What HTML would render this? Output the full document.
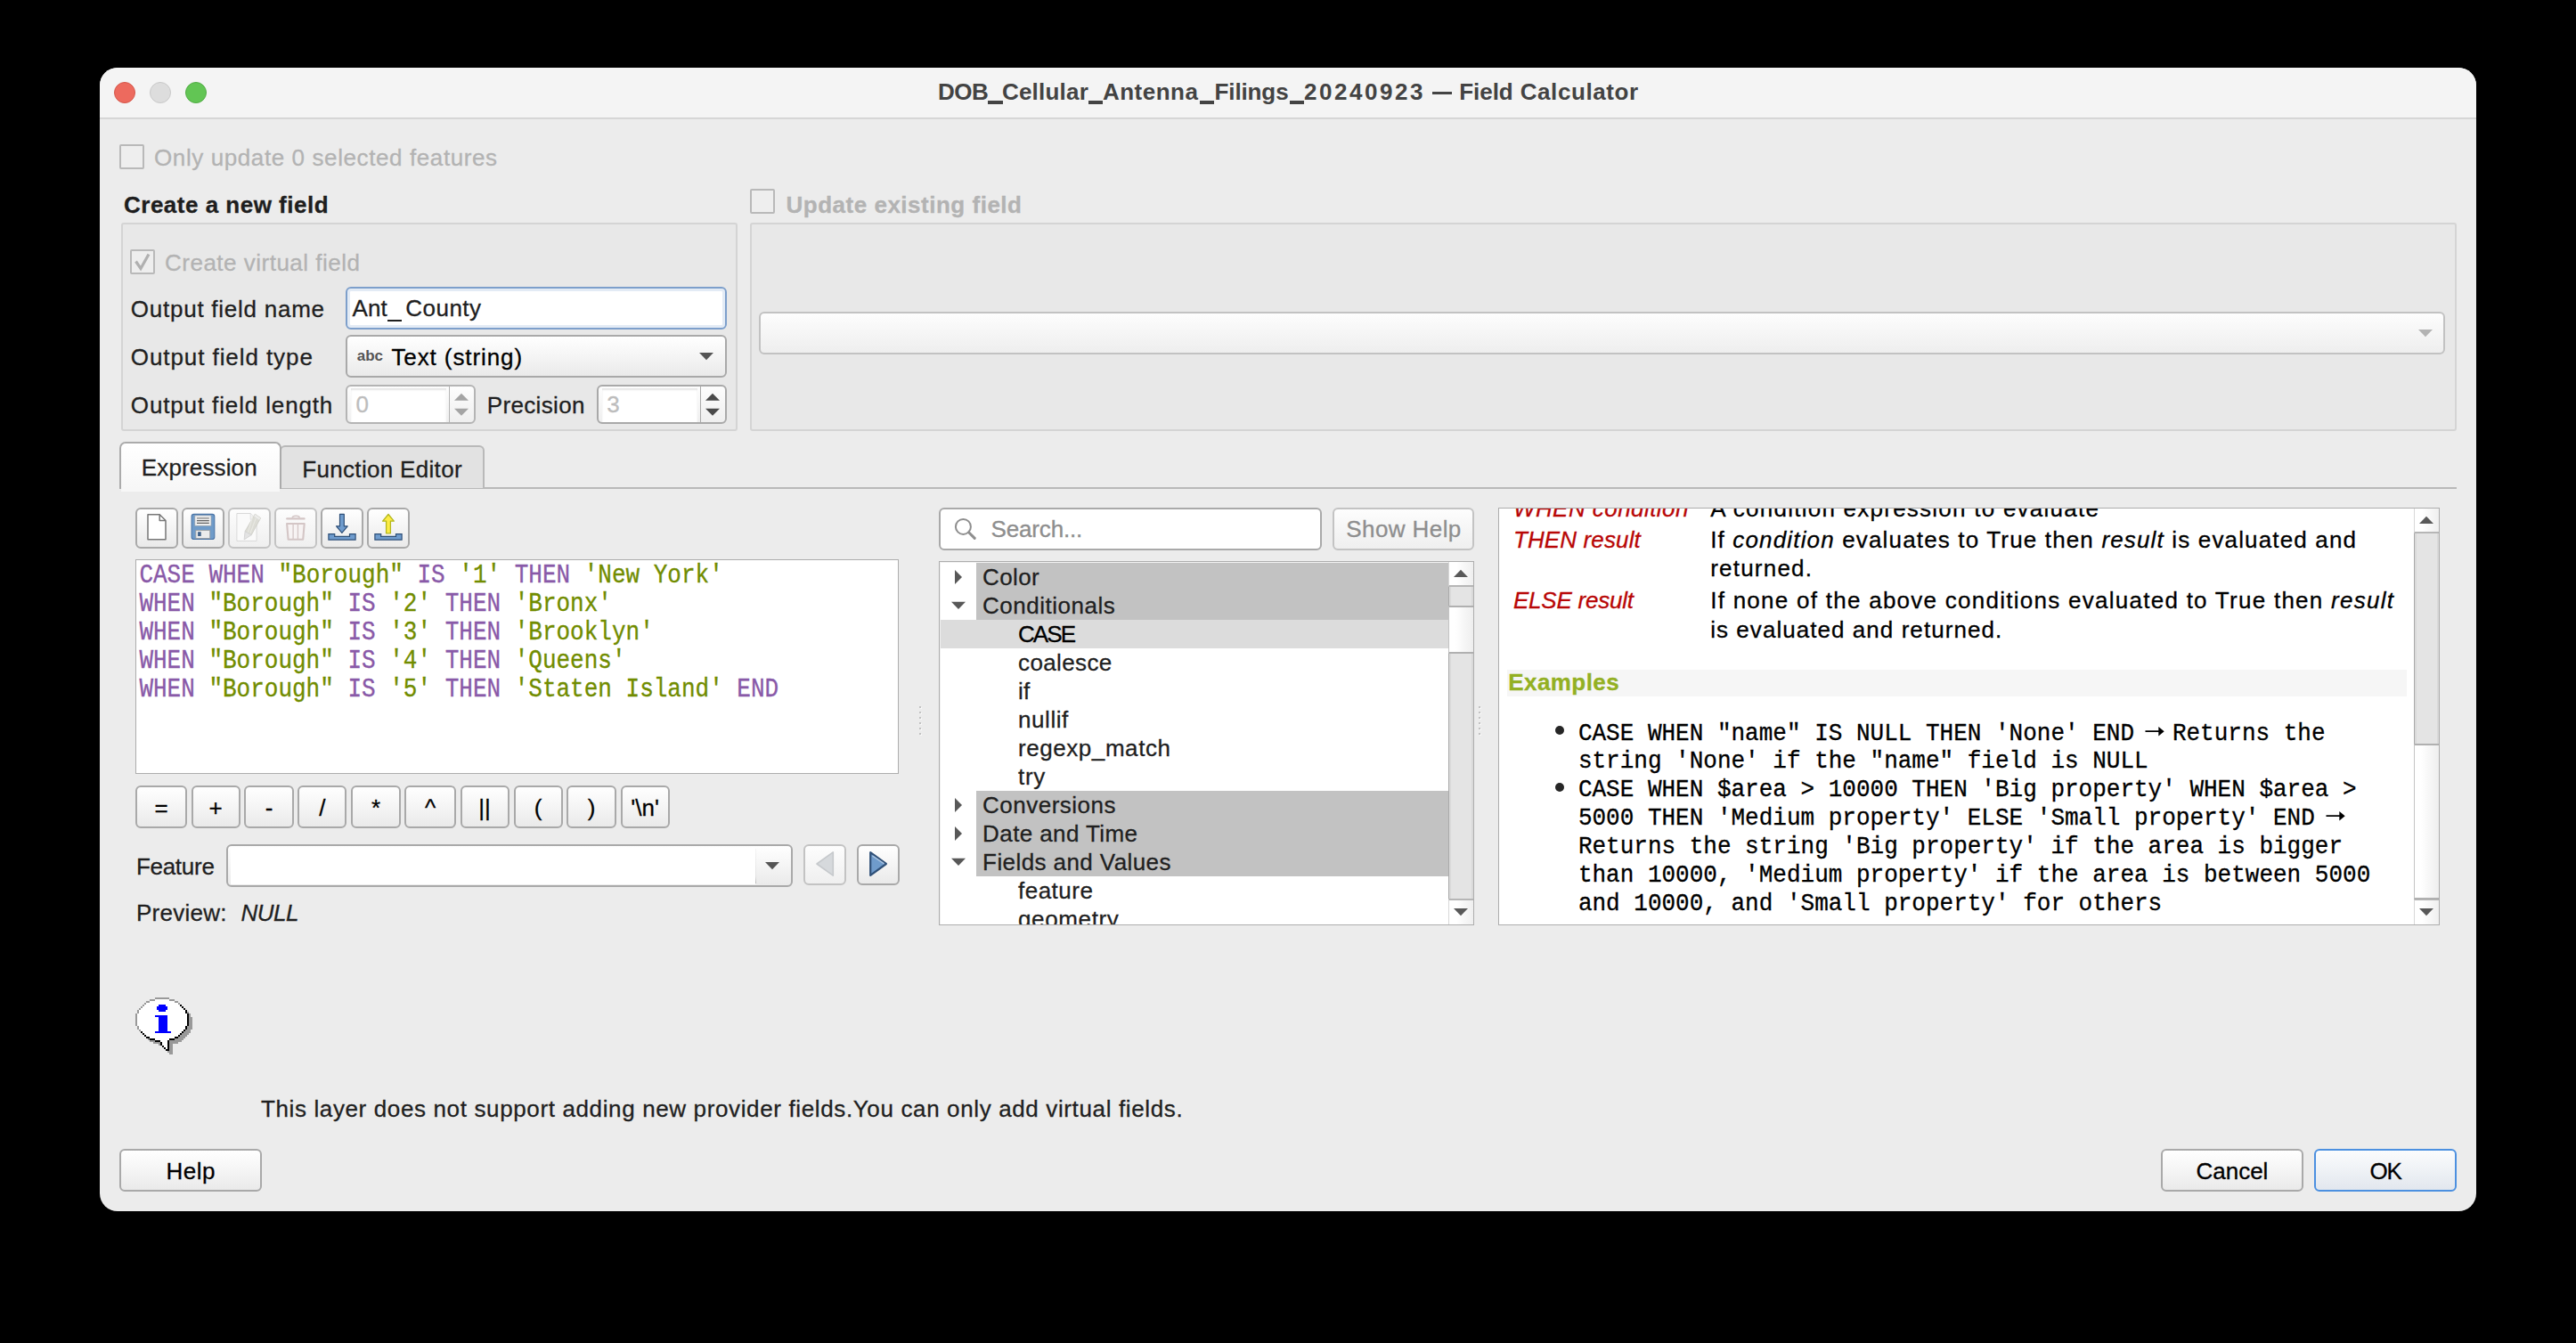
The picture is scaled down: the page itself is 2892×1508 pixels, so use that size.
<!DOCTYPE html>
<html><head><meta charset="utf-8"><title>Field Calculator</title>
<style>
html,body{margin:0;padding:0;background:#000;}
body{width:2892px;height:1508px;position:relative;overflow:hidden;font-family:"Liberation Sans",sans-serif;color:#1f1f1f;}
div,span.t,svg{position:absolute;box-sizing:border-box;}
span.t{white-space:pre;-webkit-text-stroke:0.3px;}
.win{left:112px;top:76px;width:2668px;height:1284px;border-radius:20px;background:#ececec;overflow:hidden;}
.tb{left:0;top:0;width:100%;height:58px;background:#f4f4f4;border-bottom:1px solid #dcdcdc;box-shadow:inset 0 -1px 0 #cecece;}
.tl{width:24px;height:24px;border-radius:50%;top:92px;}
.btn{border:2px solid #a9a9a9;border-radius:6px;background:linear-gradient(#ffffff,#eaeaea);}
.btnd{border:2px solid #c3c3c3;border-radius:6px;background:linear-gradient(#fdfdfd,#efefef);}
.inp{border:2px solid #a9a9a9;border-radius:6px;background:#fff;}
.gb{border:2px solid #d4d4d4;background:#e8e8e8;border-radius:3px;}
.cb{border:2px solid #b9b9b9;background:#eeeeee;border-radius:2px;}
.pane{background:#fff;border:1px solid #adadad;}
.ar{display:inline-block;width:42.9px;height:10px;position:relative;}
</style></head><body>

<div class="win"><div class="tb"></div></div>
<div class="tl" style="left:128px;background:#ed6a5e;border:1px solid #d5584c"></div>
<div class="tl" style="left:168px;background:#dddddd;border:1px solid #c9c9c9"></div>
<div class="tl" style="left:208px;background:#62c554;border:1px solid #52ad46"></div>
<span class="t" style="left:1052.9px;top:90.0px;font-size:26px;line-height:26px;font-weight:700;color:#434343;letter-spacing:-0.394px;-webkit-text-stroke:0;">DOB</span>
<span class="t" style="left:1124.9px;top:90.0px;font-size:26px;line-height:26px;font-weight:700;color:#434343;letter-spacing:0.228px;-webkit-text-stroke:0;">Cellular</span>
<span class="t" style="left:1237.9px;top:90.0px;font-size:26px;line-height:26px;font-weight:700;color:#434343;letter-spacing:0.500px;-webkit-text-stroke:0;">Antenna</span>
<span class="t" style="left:1363.5px;top:90.0px;font-size:26px;line-height:26px;font-weight:700;color:#434343;letter-spacing:-0.112px;-webkit-text-stroke:0;">Filings</span>
<span class="t" style="left:1464.1px;top:90.0px;font-size:26px;line-height:26px;font-weight:700;color:#434343;letter-spacing:2.539px;-webkit-text-stroke:0;">20240923</span>
<span class="t" style="left:1638.2px;top:90.0px;font-size:26px;line-height:26px;font-weight:700;color:#434343;letter-spacing:-0.034px;-webkit-text-stroke:0;">Field</span>
<span class="t" style="left:1706.7px;top:90.0px;font-size:26px;line-height:26px;font-weight:700;color:#434343;letter-spacing:0.594px;-webkit-text-stroke:0;">Calculator</span>
<div class="" style="left:1109.3px;top:113.4px;width:16.3px;height:3.3px;background:#434343;"></div>
<div class="" style="left:1221.8px;top:113.4px;width:16.3px;height:3.3px;background:#434343;"></div>
<div class="" style="left:1346.5px;top:113.4px;width:16.3px;height:3.3px;background:#434343;"></div>
<div class="" style="left:1447.6px;top:113.4px;width:16.3px;height:3.3px;background:#434343;"></div>
<div class="" style="left:1608.0px;top:102.5px;width:22.2px;height:3.3px;background:#434343;"></div>
<div class="cb" style="left:134.0px;top:162.0px;width:28.0px;height:28.0px;"></div>
<span class="t" style="left:173.0px;top:164.0px;font-size:26px;line-height:26px;color:#b3b3b3;letter-spacing:0.599px;">Only update 0 selected features</span>
<span class="t" style="left:139.0px;top:217.2px;font-size:26px;line-height:26px;font-weight:700;color:#1e1e1e;letter-spacing:0.496px;">Create a new field</span>
<div class="gb" style="left:136.0px;top:250.0px;width:691.5px;height:233.5px;"></div>
<div class="cb" style="left:146.0px;top:280.0px;width:28.0px;height:28.0px;"><svg width="24" height="24" viewBox="0 0 24 24" style="left:0;top:0"><path d="M4.5 11.5 L10 19.5 L19 3.5" fill="none" stroke="#b0b0b0" stroke-width="3.2"/></svg></div>
<span class="t" style="left:185.0px;top:281.9px;font-size:26px;line-height:26px;color:#b3b3b3;letter-spacing:0.498px;">Create virtual field</span>
<span class="t" style="left:146.8px;top:333.9px;font-size:26px;line-height:26px;letter-spacing:0.751px;">Output field name</span>
<span class="t" style="left:146.8px;top:387.8px;font-size:26px;line-height:26px;letter-spacing:0.921px;">Output field type</span>
<span class="t" style="left:146.8px;top:441.6px;font-size:26px;line-height:26px;letter-spacing:0.861px;">Output field length</span>
<div class="" style="left:388.0px;top:322.0px;width:428.0px;height:48.0px;border:2px solid #7d9fcb;border-radius:6px;background:#fff;box-shadow:inset 0 0 0 3px #e3ebf5;"></div>
<span class="t" style="left:395.4px;top:333.3px;font-size:26px;line-height:26px;letter-spacing:0.190px;">Ant</span>
<div class="" style="left:435.0px;top:359.2px;width:15.7px;height:2.0px;background:#1f1f1f;"></div>
<span class="t" style="left:455.3px;top:333.3px;font-size:26px;line-height:26px;letter-spacing:0.468px;">County</span>
<div class="btn" style="left:388.0px;top:376.0px;width:428.0px;height:48.0px;"></div>
<span class="t" style="left:400.8px;top:390.8px;font-size:17px;line-height:17px;font-weight:700;color:#555555;letter-spacing:-0.032px;-webkit-text-stroke:0;">abc</span>
<span class="t" style="left:439.4px;top:388.3px;font-size:26px;line-height:26px;color:#000;letter-spacing:0.907px;">Text (string)</span>
<svg style="left:784px;top:395px" width="18" height="10" viewBox="0 0 18 10"><path d="M1 1 L17 1 L9 9.3 Z" fill="#555"/></svg>
<div class="" style="left:388.0px;top:432.0px;width:146.0px;height:44.0px;border:2px solid #b4b4b4;border-radius:6px;background:linear-gradient(#fdfdfd,#efefef);"></div><div class="" style="left:393.5px;top:436.0px;width:107.5px;height:37.5px;background:#fff;box-shadow:inset 0 2px 2px #e6e6e6;"></div><div class="" style="left:503.5px;top:434.0px;width:1.8px;height:40.0px;background:#b4b4b4;"></div><svg style="left:509.2px;top:441.0px" width="18" height="26" viewBox="0 0 18 26"><path d="M1 8.7 L9 0.8 L17 8.7 Z M1 17.8 L17 17.8 L9 25.8 Z" fill="#a4a4a4"/></svg><span class="t" style="left:399.5px;top:441.2px;font-size:26px;line-height:26px;color:#bdbdbd;">0</span>
<span class="t" style="left:546.8px;top:441.5px;font-size:26px;line-height:26px;letter-spacing:0.340px;">Precision</span>
<div class="" style="left:670.0px;top:432.0px;width:146.0px;height:44.0px;border:2px solid #a9a9a9;border-radius:6px;background:linear-gradient(#fdfdfd,#efefef);"></div><div class="" style="left:675.5px;top:436.0px;width:107.5px;height:37.5px;background:#fff;box-shadow:inset 0 2px 2px #e6e6e6;"></div><div class="" style="left:785.5px;top:434.0px;width:1.8px;height:40.0px;background:#a9a9a9;"></div><svg style="left:791.2px;top:441.0px" width="18" height="26" viewBox="0 0 18 26"><path d="M1 8.7 L9 0.8 L17 8.7 Z M1 17.8 L17 17.8 L9 25.8 Z" fill="#4a4a4a"/></svg><span class="t" style="left:681.3px;top:441.2px;font-size:26px;line-height:26px;color:#bdbdbd;">3</span>
<div class="cb" style="left:842.0px;top:212.0px;width:28.0px;height:28.0px;"></div>
<span class="t" style="left:882.5px;top:217.2px;font-size:26px;line-height:26px;font-weight:700;color:#b3b3b3;letter-spacing:0.511px;">Update existing field</span>
<div class="gb" style="left:842.0px;top:250.0px;width:1915.5px;height:233.5px;"></div>
<div class="" style="left:852.3px;top:350.4px;width:1893.2px;height:47.2px;border:2px solid #c2c2c2;border-radius:6px;background:linear-gradient(#fdfdfd,#eeeeee);"></div>
<svg style="left:2714px;top:369px" width="18" height="10" viewBox="0 0 18 10"><path d="M1 1 L17 1 L9 9.3 Z" fill="#b3b3b3"/></svg>
<div class="" style="left:134.0px;top:546.6px;width:2623.5px;height:2.4px;background:#b9b9b9;"></div>
<div class="" style="left:314.0px;top:499.8px;width:230.0px;height:48.6px;border:2px solid #b9b9b9;border-bottom:none;border-radius:6px 6px 0 0;background:#e2e2e2;"></div>
<div class="" style="left:134.0px;top:496.4px;width:181.8px;height:52.6px;border:2px solid #ababab;border-bottom:none;border-radius:7px 7px 0 0;background:linear-gradient(#ffffff,#f7f7f7);"></div>
<div class="" style="left:136.0px;top:548.0px;width:177.8px;height:3.6px;background:#f7f7f7;"></div>
<span class="t" style="left:158.8px;top:512.4px;font-size:26px;line-height:26px;letter-spacing:0.138px;">Expression</span>
<span class="t" style="left:339.3px;top:514.4px;font-size:26px;line-height:26px;letter-spacing:0.315px;">Function Editor</span>
<div class="btn" style="left:152.0px;top:570.0px;width:48.0px;height:46.0px;"></div><div class="btn" style="left:204.0px;top:570.0px;width:48.0px;height:46.0px;"></div><div class="btnd" style="left:256.0px;top:570.0px;width:48.0px;height:46.0px;"></div><div class="btnd" style="left:308.0px;top:570.0px;width:48.0px;height:46.0px;"></div><div class="btn" style="left:360.0px;top:570.0px;width:48.0px;height:46.0px;"></div><div class="btn" style="left:412.0px;top:570.0px;width:48.0px;height:46.0px;"></div><svg style="left:152.15px;top:570.1px" width="48" height="46" viewBox="0 0 48 46"><path d="M14 7.75 H27.2 L34 14.5 V35.85 H14 Z" fill="#fff" stroke="#777" stroke-width="1.5" stroke-linejoin="round"/><path d="M27.2 7.75 V14.5 H34" fill="none" stroke="#777" stroke-width="1.5" stroke-linejoin="round"/></svg><svg style="left:204.15px;top:570.1px" width="48" height="46" viewBox="0 0 48 46"><rect x="11.1" y="7.4" width="25.7" height="28.1" rx="2.6" fill="#6f9bc9" stroke="#4a74a6" stroke-width="1.1"/><rect x="14.8" y="8.9" width="18.2" height="11.4" fill="#f0f0f0" stroke="#9aa3ad" stroke-width="0.7"/><path d="M17 11.9 H30.8" stroke="#8f8f8f" stroke-width="1.4"/><path d="M17 14.6 H30.8 M17 17.3 H30.8" stroke="#646464" stroke-width="1.2"/><rect x="15.9" y="25.6" width="15.8" height="8.8" fill="#ececec" stroke="#9d9d9d" stroke-width="0.8"/><rect x="18.1" y="27.2" width="3.6" height="4.8" fill="#3f6189"/></svg><svg style="left:256.15px;top:570.1px" width="48" height="46" viewBox="0 0 48 46"><path d="M9.9 6.5 H25.2 L32.1 13.4 V37.4 H9.9 Z" fill="#fafafa" stroke="#d9d9d9" stroke-width="1"/><path d="M25.2 6.5 V13.4 H32.1" fill="#f2f2f2" stroke="#dcdcdc" stroke-width="0.8"/><path d="M30.3 7.3 L36.6 11.7 L26.2 30.7 L19.1 26.6 Z" fill="#dcdcd5" stroke="#cdcdc6" stroke-width="0.8" stroke-linejoin="round"/><path d="M28.2 8.6 L22.2 28.3 M32.4 8.9 L24.6 29.6" stroke="#e9e9e4" stroke-width="1.1"/><path d="M19.1 26.6 L26.2 30.7 L18.1 35.95 Z" fill="#e3e3e3" stroke="#cfcfcf" stroke-width="0.8" stroke-linejoin="round"/><path d="M30.3 7.3 L36.6 11.7 L35.2 14.2 L28.9 9.9 Z" fill="#ededeb" stroke="#d6d6d2" stroke-width="0.6"/></svg><svg style="left:308.15px;top:570.1px" width="48" height="46" viewBox="0 0 48 46"><g fill="none" stroke="#d4c6c6"><path d="M14.2 12.45 H33.6" stroke-width="2.2" stroke-linecap="round"/><path d="M20.2 11.6 C20.2 8.4 28.3 8.4 28.3 11.6" stroke-width="1.5"/><path d="M14.1 18 H33.7 L32.2 35.7 H15.6 Z" fill="#f7f3f3" stroke-width="2.1" stroke-linejoin="round"/><path d="M21.1 18.4 V35.4 M26.45 18.4 V35.4" stroke-width="1.3"/></g></svg><svg style="left:360.15px;top:570.1px" width="48" height="46" viewBox="0 0 48 46"><path d="M21.5 7.3 H26.3 V20.8 H30.2 L23.9 28.4 L17.6 20.8 H21.5 Z" fill="#6f9cce" stroke="#2e4f78" stroke-width="1.2" stroke-linejoin="round"/><path d="M8.9 29.6 H15.7 V32.4 H32.5 V29.6 H39.1 V36.1 H8.9 Z" fill="#6f9cce" stroke="#2e4f78" stroke-width="1.2" stroke-linejoin="miter"/></svg><svg style="left:412.15px;top:570.1px" width="48" height="46" viewBox="0 0 48 46"><path d="M8.9 29.6 H15.7 V32.4 H32.5 V29.6 H39.1 V36.1 H8.9 Z" fill="#6f9cce" stroke="#2e4f78" stroke-width="1.2" stroke-linejoin="miter"/><path d="M21.6 28.8 H26.4 V15.2 H30.3 L24 7.5 L17.6 15.2 H21.6 Z" fill="#fdec45" stroke="#b3b71e" stroke-width="1.3" stroke-linejoin="round"/></svg>
<div class="pane" style="left:152.0px;top:628.0px;width:857.0px;height:241.0px;"></div><span class="t" style="left:156.4px;top:634.1px;font-size:26px;line-height:26px;font-family:'Liberation Mono',monospace;transform:scaleY(1.14);transform-origin:0 76%;"><span style="color:#8959a8">CASE WHEN </span><span style="color:#718c00">&quot;Borough&quot;</span><span style="color:#8959a8"> IS </span><span style="color:#718c00">'1'</span><span style="color:#8959a8"> THEN </span><span style="color:#718c00">'New York'</span></span><span class="t" style="left:156.4px;top:666.2px;font-size:26px;line-height:26px;font-family:'Liberation Mono',monospace;transform:scaleY(1.14);transform-origin:0 76%;"><span style="color:#8959a8">WHEN </span><span style="color:#718c00">&quot;Borough&quot;</span><span style="color:#8959a8"> IS </span><span style="color:#718c00">'2'</span><span style="color:#8959a8"> THEN </span><span style="color:#718c00">'Bronx'</span></span><span class="t" style="left:156.4px;top:698.2px;font-size:26px;line-height:26px;font-family:'Liberation Mono',monospace;transform:scaleY(1.14);transform-origin:0 76%;"><span style="color:#8959a8">WHEN </span><span style="color:#718c00">&quot;Borough&quot;</span><span style="color:#8959a8"> IS </span><span style="color:#718c00">'3'</span><span style="color:#8959a8"> THEN </span><span style="color:#718c00">'Brooklyn'</span></span><span class="t" style="left:156.4px;top:730.3px;font-size:26px;line-height:26px;font-family:'Liberation Mono',monospace;transform:scaleY(1.14);transform-origin:0 76%;"><span style="color:#8959a8">WHEN </span><span style="color:#718c00">&quot;Borough&quot;</span><span style="color:#8959a8"> IS </span><span style="color:#718c00">'4'</span><span style="color:#8959a8"> THEN </span><span style="color:#718c00">'Queens'</span></span><span class="t" style="left:156.4px;top:762.3px;font-size:26px;line-height:26px;font-family:'Liberation Mono',monospace;transform:scaleY(1.14);transform-origin:0 76%;"><span style="color:#8959a8">WHEN </span><span style="color:#718c00">&quot;Borough&quot;</span><span style="color:#8959a8"> IS </span><span style="color:#718c00">'5'</span><span style="color:#8959a8"> THEN </span><span style="color:#718c00">'Staten Island'</span><span style="color:#8959a8"> END</span></span>
<div class="btn" style="left:152.4px;top:882.0px;width:57.2px;height:48.0px;"><span class="t" style="left:0;width:100%;text-align:center;top:10px;font-size:26px;line-height:26px;color:#000">=</span></div><div class="btn" style="left:214.5px;top:882.0px;width:55.0px;height:48.0px;"><span class="t" style="left:0;width:100%;text-align:center;top:10px;font-size:26px;line-height:26px;color:#000">+</span></div><div class="btn" style="left:274.4px;top:882.0px;width:55.2px;height:48.0px;"><span class="t" style="left:0;width:100%;text-align:center;top:10px;font-size:26px;line-height:26px;color:#000">-</span></div><div class="btn" style="left:334.4px;top:882.0px;width:55.1px;height:48.0px;"><span class="t" style="left:0;width:100%;text-align:center;top:10px;font-size:26px;line-height:26px;color:#000">/</span></div><div class="btn" style="left:394.4px;top:882.0px;width:55.2px;height:48.0px;"><span class="t" style="left:0;width:100%;text-align:center;top:10px;font-size:26px;line-height:26px;color:#000">*</span></div><div class="btn" style="left:454.4px;top:882.0px;width:57.3px;height:48.0px;"><span class="t" style="left:0;width:100%;text-align:center;top:10px;font-size:26px;line-height:26px;color:#000">^</span></div><div class="btn" style="left:516.6px;top:882.0px;width:55.0px;height:48.0px;"><span class="t" style="left:0;width:100%;text-align:center;top:10px;font-size:26px;line-height:26px;color:#000">||</span></div><div class="btn" style="left:576.5px;top:882.0px;width:55.0px;height:48.0px;"><span class="t" style="left:0;width:100%;text-align:center;top:10px;font-size:26px;line-height:26px;color:#000">(</span></div><div class="btn" style="left:636.4px;top:882.0px;width:55.2px;height:48.0px;"><span class="t" style="left:0;width:100%;text-align:center;top:10px;font-size:26px;line-height:26px;color:#000">)</span></div><div class="btn" style="left:696.5px;top:882.0px;width:55.3px;height:48.0px;"><span class="t" style="left:0;width:100%;text-align:center;top:10px;font-size:26px;line-height:26px;color:#000">'\n'</span></div>
<span class="t" style="left:152.9px;top:960.2px;font-size:26px;line-height:26px;letter-spacing:-0.273px;">Feature</span><div class="btn" style="left:254.3px;top:948.0px;width:635.4px;height:48.0px;"></div><div class="" style="left:258.5px;top:952.0px;width:589.9px;height:40.5px;background:#fff;"></div><div class="" style="left:847.6px;top:953.0px;width:1.4px;height:39.0px;background:linear-gradient(#f4f4f4,#e2e2e2 80%,#b9b9b9);"></div><svg style="left:858px;top:967px" width="18" height="10" viewBox="0 0 18 10"><path d="M1 1 L17 1 L9 9.3 Z" fill="#555"/></svg><div class="btnd" style="left:902.0px;top:948.0px;width:47.6px;height:46.0px;"><svg width="44" height="42" viewBox="0 0 44 42" style="left:0;top:0"><path d="M31.3 6.9 V33.2 L13 20 Z" fill="#d6d9dc" stroke="#c6c9cc" stroke-width="1.6" stroke-linejoin="round"/></svg></div><div class="btn" style="left:962.0px;top:948.0px;width:47.7px;height:46.0px;"><svg width="44" height="42" viewBox="0 0 44 42" style="left:0;top:0"><path d="M13.2 7.1 V32.9 L30.9 20 Z" fill="#6f9bcb" stroke="#2f5078" stroke-width="2.2" stroke-linejoin="round"/><path d="M15.4 10.8 L28.6 19.8" stroke="#a9c4e2" stroke-width="1.4"/></svg></div><span class="t" style="left:152.9px;top:1011.9px;font-size:26px;line-height:26px;letter-spacing:0.287px;">Preview:</span><span class="t" style="left:270.4px;top:1011.9px;font-size:26px;line-height:26px;font-style:italic;letter-spacing:-0.471px;">NULL</span>
<div class="inp" style="left:1054.0px;top:570.0px;width:429.6px;height:48.0px;"></div><svg style="left:1066px;top:578px" width="36" height="34" viewBox="0 0 36 34"><circle cx="15.4" cy="13.4" r="8.5" fill="none" stroke="#8e8e8e" stroke-width="2"/><path d="M21.6 19.8 L28.2 26.4" stroke="#8e8e8e" stroke-width="3" stroke-linecap="round"/></svg><span class="t" style="left:1112.5px;top:581.1px;font-size:26px;line-height:26px;color:#8e8e8e;letter-spacing:-0.151px;">Search...</span><div class="btnd" style="left:1496.4px;top:570.0px;width:159.1px;height:48.0px;"></div><span class="t" style="left:1511.3px;top:581.1px;font-size:26px;line-height:26px;color:#8e8e8e;letter-spacing:0.407px;">Show Help</span>
<div class="pane" style="left:1054.0px;top:630.0px;width:601.0px;height:409.0px;overflow:hidden;box-shadow:inset 1px 1px 0 #f0f0f0;"></div><div class="" style="left:1096.0px;top:632.0px;width:529.5px;height:32.0px;background:#c2c2c2;"></div><svg style="left:1070px;top:639px" width="12" height="18" viewBox="0 0 12 18"><path d="M2 1 L10 9 L2 17 Z" fill="#585858"/></svg><div class="" style="left:1096.0px;top:664.0px;width:529.5px;height:32.0px;background:#c2c2c2;"></div><svg style="left:1067px;top:674px" width="18" height="12" viewBox="0 0 18 12"><path d="M1 1.8 L17 1.8 L9 10 Z" fill="#585858"/></svg><div class="" style="left:1056.0px;top:696.0px;width:569.5px;height:32.0px;background:#dcdcdc;"></div><div class="" style="left:1096.0px;top:888.0px;width:529.5px;height:32.0px;background:#c2c2c2;"></div><svg style="left:1070px;top:895px" width="12" height="18" viewBox="0 0 12 18"><path d="M2 1 L10 9 L2 17 Z" fill="#585858"/></svg><div class="" style="left:1096.0px;top:920.0px;width:529.5px;height:32.0px;background:#c2c2c2;"></div><svg style="left:1070px;top:927px" width="12" height="18" viewBox="0 0 12 18"><path d="M2 1 L10 9 L2 17 Z" fill="#585858"/></svg><div class="" style="left:1096.0px;top:952.0px;width:529.5px;height:32.0px;background:#c2c2c2;"></div><svg style="left:1067px;top:962px" width="18" height="12" viewBox="0 0 18 12"><path d="M1 1.8 L17 1.8 L9 10 Z" fill="#585858"/></svg><div style="left:1056px;top:632px;width:570px;height:406px;overflow:hidden"><span class="t" style="left:47.1px;top:2.7px;font-size:26px;line-height:26px;letter-spacing:0.352px;">Color</span><span class="t" style="left:47.1px;top:34.7px;font-size:26px;line-height:26px;letter-spacing:0.501px;">Conditionals</span><span class="t" style="left:87.0px;top:66.7px;font-size:26px;line-height:26px;color:#000;letter-spacing:-1.928px;">CASE</span><span class="t" style="left:87.0px;top:98.7px;font-size:26px;line-height:26px;letter-spacing:0.384px;">coalesce</span><span class="t" style="left:87.0px;top:130.7px;font-size:26px;line-height:26px;letter-spacing:0.300px;">if</span><span class="t" style="left:87.0px;top:162.7px;font-size:26px;line-height:26px;letter-spacing:0.569px;">nullif</span><span class="t" style="left:87.0px;top:194.7px;font-size:26px;line-height:26px;letter-spacing:0.561px;">regexp_match</span><span class="t" style="left:87.0px;top:226.7px;font-size:26px;line-height:26px;letter-spacing:0.703px;">try</span><span class="t" style="left:47.1px;top:258.7px;font-size:26px;line-height:26px;letter-spacing:0.489px;">Conversions</span><span class="t" style="left:47.1px;top:290.7px;font-size:26px;line-height:26px;letter-spacing:0.400px;">Date and Time</span><span class="t" style="left:47.1px;top:322.7px;font-size:26px;line-height:26px;letter-spacing:0.415px;">Fields and Values</span><span class="t" style="left:87.0px;top:354.7px;font-size:26px;line-height:26px;letter-spacing:0.492px;">feature</span><span class="t" style="left:87.0px;top:386.7px;font-size:26px;line-height:26px;letter-spacing:0.639px;">geometry</span></div><div class="" style="left:1625.5px;top:631.0px;width:28.5px;height:407.0px;background:#e4e4e4;border-left:1px solid #a9a9a9;box-shadow:inset -2px 0 0 #d9d9d9, inset 2px 0 0 #dadada;"></div><div class="" style="left:1625.5px;top:631.0px;width:28.5px;height:28.0px;background:linear-gradient(90deg,#ffffff 30%,#efefef);border-bottom:2px solid #b6b6b6;border-left:1px solid #d8d8d8;"></div><svg style="left:1631.2px;top:639.4px" width="18" height="10" viewBox="0 0 18 10"><path d="M1 9 L9 0.8 L17 9 Z" fill="#595959"/></svg><div class="" style="left:1625.5px;top:1009.0px;width:28.5px;height:29.0px;background:linear-gradient(90deg,#ffffff 30%,#efefef);border-top:2px solid #b6b6b6;border-left:1px solid #d8d8d8;"></div><svg style="left:1631.2px;top:1019.4px" width="18" height="10" viewBox="0 0 18 10"><path d="M1 1 L17 1 L9 9.2 Z" fill="#595959"/></svg><div class="" style="left:1625.5px;top:680.0px;width:28.5px;height:54.0px;background:linear-gradient(90deg,#ffffff 25%,#eeeeee);border-top:2px solid #b0b0b0;border-bottom:2px solid #b0b0b0;border-left:1px solid #c4c4c4;"></div>
<div class="pane" style="left:1682.0px;top:570.0px;width:1057.0px;height:469.0px;overflow:hidden;"></div><div style="left:1683px;top:571px;width:1027px;height:467px;overflow:hidden"><span class="t" style="left:15.9px;top:-13.5px;font-size:26px;line-height:26px;font-style:italic;color:#b80606;letter-spacing:0.448px;">WHEN condition</span><span class="t" style="left:237.2px;top:-13.5px;font-size:26px;line-height:26px;color:#000;letter-spacing:1.247px;">A condition expression to evaluate</span><span class="t" style="left:15.9px;top:22.1px;font-size:26px;line-height:26px;font-style:italic;color:#b80606;letter-spacing:0.129px;">THEN result</span><span class="t" style="left:237.2px;top:22.1px;font-size:26px;line-height:26px;color:#000;letter-spacing:1.158px;">If <i>condition</i> evaluates to True then <i>result</i> is evaluated and</span><span class="t" style="left:237.2px;top:54.0px;font-size:26px;line-height:26px;color:#000;letter-spacing:1.214px;">returned.</span><span class="t" style="left:15.9px;top:89.9px;font-size:26px;line-height:26px;font-style:italic;color:#b80606;letter-spacing:-0.209px;">ELSE result</span><span class="t" style="left:237.2px;top:89.9px;font-size:26px;line-height:26px;color:#000;letter-spacing:1.264px;">If none of the above conditions evaluated to True then <i>result</i></span><span class="t" style="left:237.2px;top:122.6px;font-size:26px;line-height:26px;color:#000;letter-spacing:1.052px;">is evaluated and returned.</span><div class="" style="left:9.0px;top:180.5px;width:1010.2px;height:30.3px;background:#f6f6f6;"></div><span class="t" style="left:10.2px;top:181.5px;font-size:26px;line-height:26px;font-weight:700;color:#93b023;letter-spacing:0.449px;">Examples</span><span class="t" style="left:88.9px;top:239.6px;font-size:26px;line-height:26px;color:#000;font-family:'Liberation Mono',monospace;transform:scaleY(1.09);transform-origin:0 76%;">CASE WHEN &quot;name&quot; IS NULL THEN 'None' END<span class="ar"><svg style="left:12.2px;top:-6.8px" width="23" height="16" viewBox="0 0 24 16"><path d="M0.5 8 H20" stroke="#000" stroke-width="1.7" fill="none"/><path d="M16 3 L22.6 8 L16 13 Z" fill="#000"/></svg></span>Returns the</span><span class="t" style="left:88.9px;top:271.4px;font-size:26px;line-height:26px;color:#000;font-family:'Liberation Mono',monospace;transform:scaleY(1.09);transform-origin:0 76%;">string 'None' if the &quot;name&quot; field is NULL</span><span class="t" style="left:88.9px;top:303.4px;font-size:26px;line-height:26px;color:#000;font-family:'Liberation Mono',monospace;transform:scaleY(1.09);transform-origin:0 76%;">CASE WHEN $area &gt; 10000 THEN 'Big property' WHEN $area &gt;</span><span class="t" style="left:88.9px;top:335.4px;font-size:26px;line-height:26px;color:#000;font-family:'Liberation Mono',monospace;transform:scaleY(1.09);transform-origin:0 76%;">5000 THEN 'Medium property' ELSE 'Small property' END<span class="ar"><svg style="left:12.2px;top:-6.8px" width="23" height="16" viewBox="0 0 24 16"><path d="M0.5 8 H20" stroke="#000" stroke-width="1.7" fill="none"/><path d="M16 3 L22.6 8 L16 13 Z" fill="#000"/></svg></span></span><span class="t" style="left:88.9px;top:367.4px;font-size:26px;line-height:26px;color:#000;font-family:'Liberation Mono',monospace;transform:scaleY(1.09);transform-origin:0 76%;">Returns the string 'Big property' if the area is bigger</span><span class="t" style="left:88.9px;top:399.4px;font-size:26px;line-height:26px;color:#000;font-family:'Liberation Mono',monospace;transform:scaleY(1.09);transform-origin:0 76%;">than 10000, 'Medium property' if the area is between 5000</span><span class="t" style="left:88.9px;top:431.4px;font-size:26px;line-height:26px;color:#000;font-family:'Liberation Mono',monospace;transform:scaleY(1.09);transform-origin:0 76%;">and 10000, and 'Small property' for others</span><div class="" style="left:63.0px;top:243.8px;width:10.2px;height:10.2px;background:#262626;border-radius:50%;"></div><div class="" style="left:63.0px;top:307.6px;width:10.2px;height:10.2px;background:#262626;border-radius:50%;"></div></div><div class="" style="left:2709.5px;top:571.0px;width:28.5px;height:467.0px;background:#e4e4e4;border-left:1px solid #a9a9a9;box-shadow:inset -2px 0 0 #d9d9d9, inset 2px 0 0 #dadada;"></div><div class="" style="left:2709.5px;top:571.0px;width:28.5px;height:28.0px;background:linear-gradient(90deg,#ffffff 30%,#efefef);border-bottom:2px solid #b6b6b6;border-left:1px solid #d8d8d8;"></div><svg style="left:2715.2px;top:579.4px" width="18" height="10" viewBox="0 0 18 10"><path d="M1 9 L9 0.8 L17 9 Z" fill="#595959"/></svg><div class="" style="left:2709.5px;top:1009.0px;width:28.5px;height:29.0px;background:linear-gradient(90deg,#ffffff 30%,#efefef);border-top:2px solid #b6b6b6;border-left:1px solid #d8d8d8;"></div><svg style="left:2715.2px;top:1019.4px" width="18" height="10" viewBox="0 0 18 10"><path d="M1 1 L17 1 L9 9.2 Z" fill="#595959"/></svg><div class="" style="left:2709.5px;top:835.0px;width:28.5px;height:175.0px;background:linear-gradient(90deg,#ffffff 25%,#eeeeee);border-top:2px solid #b0b0b0;border-bottom:2px solid #b0b0b0;border-left:1px solid #c4c4c4;"></div>
<div class="" style="left:1032.0px;top:793.0px;width:2.0px;height:2.0px;background:#c2c2c2;box-shadow:1px 1px 0 #f8f8f8;"></div><div class="" style="left:1032.0px;top:799.0px;width:2.0px;height:2.0px;background:#c2c2c2;box-shadow:1px 1px 0 #f8f8f8;"></div><div class="" style="left:1032.0px;top:805.0px;width:2.0px;height:2.0px;background:#c2c2c2;box-shadow:1px 1px 0 #f8f8f8;"></div><div class="" style="left:1032.0px;top:811.0px;width:2.0px;height:2.0px;background:#c2c2c2;box-shadow:1px 1px 0 #f8f8f8;"></div><div class="" style="left:1032.0px;top:817.0px;width:2.0px;height:2.0px;background:#c2c2c2;box-shadow:1px 1px 0 #f8f8f8;"></div><div class="" style="left:1032.0px;top:823.0px;width:2.0px;height:2.0px;background:#c2c2c2;box-shadow:1px 1px 0 #f8f8f8;"></div><div class="" style="left:1660.0px;top:793.0px;width:2.0px;height:2.0px;background:#c2c2c2;box-shadow:1px 1px 0 #f8f8f8;"></div><div class="" style="left:1660.0px;top:799.0px;width:2.0px;height:2.0px;background:#c2c2c2;box-shadow:1px 1px 0 #f8f8f8;"></div><div class="" style="left:1660.0px;top:805.0px;width:2.0px;height:2.0px;background:#c2c2c2;box-shadow:1px 1px 0 #f8f8f8;"></div><div class="" style="left:1660.0px;top:811.0px;width:2.0px;height:2.0px;background:#c2c2c2;box-shadow:1px 1px 0 #f8f8f8;"></div><div class="" style="left:1660.0px;top:817.0px;width:2.0px;height:2.0px;background:#c2c2c2;box-shadow:1px 1px 0 #f8f8f8;"></div><div class="" style="left:1660.0px;top:823.0px;width:2.0px;height:2.0px;background:#c2c2c2;box-shadow:1px 1px 0 #f8f8f8;"></div>
<svg style="left:152px;top:1120px" width="64" height="64" viewBox="0 0 32 32" shape-rendering="crispEdges"><rect x="11" y="0" width="8" height="1" fill="#999999"/><rect x="8" y="1" width="3" height="1" fill="#999999"/><rect x="11" y="1" width="8" height="1" fill="#ffffff"/><rect x="19" y="1" width="3" height="1" fill="#999999"/><rect x="6" y="2" width="2" height="1" fill="#999999"/><rect x="8" y="2" width="14" height="1" fill="#ffffff"/><rect x="22" y="2" width="2" height="1" fill="#999999"/><rect x="5" y="3" width="1" height="1" fill="#999999"/><rect x="6" y="3" width="18" height="1" fill="#ffffff"/><rect x="24" y="3" width="1" height="1" fill="#999999"/><rect x="4" y="4" width="1" height="1" fill="#999999"/><rect x="5" y="4" width="8" height="1" fill="#ffffff"/><rect x="13" y="4" width="4" height="1" fill="#0000ff"/><rect x="17" y="4" width="8" height="1" fill="#ffffff"/><rect x="25" y="4" width="1" height="1" fill="#000000"/><rect x="3" y="5" width="1" height="1" fill="#999999"/><rect x="4" y="5" width="8" height="1" fill="#ffffff"/><rect x="12" y="5" width="6" height="1" fill="#0000ff"/><rect x="18" y="5" width="8" height="1" fill="#ffffff"/><rect x="26" y="5" width="1" height="1" fill="#000000"/><rect x="2" y="6" width="1" height="1" fill="#999999"/><rect x="3" y="6" width="9" height="1" fill="#ffffff"/><rect x="12" y="6" width="6" height="1" fill="#0000ff"/><rect x="18" y="6" width="9" height="1" fill="#ffffff"/><rect x="27" y="6" width="1" height="1" fill="#000000"/><rect x="1" y="7" width="1" height="1" fill="#999999"/><rect x="2" y="7" width="11" height="1" fill="#ffffff"/><rect x="13" y="7" width="4" height="1" fill="#0000ff"/><rect x="17" y="7" width="11" height="1" fill="#ffffff"/><rect x="28" y="7" width="1" height="1" fill="#000000"/><rect x="1" y="8" width="1" height="1" fill="#999999"/><rect x="2" y="8" width="26" height="1" fill="#ffffff"/><rect x="28" y="8" width="1" height="1" fill="#000000"/><rect x="29" y="8" width="1" height="1" fill="#999999"/><rect x="0" y="9" width="1" height="1" fill="#999999"/><rect x="1" y="9" width="28" height="1" fill="#ffffff"/><rect x="29" y="9" width="1" height="1" fill="#000000"/><rect x="30" y="9" width="1" height="1" fill="#999999"/><rect x="0" y="10" width="1" height="1" fill="#999999"/><rect x="1" y="10" width="10" height="1" fill="#ffffff"/><rect x="11" y="10" width="7" height="1" fill="#0000ff"/><rect x="18" y="10" width="11" height="1" fill="#ffffff"/><rect x="29" y="10" width="1" height="1" fill="#000000"/><rect x="30" y="10" width="1" height="1" fill="#999999"/><rect x="0" y="11" width="1" height="1" fill="#999999"/><rect x="1" y="11" width="12" height="1" fill="#ffffff"/><rect x="13" y="11" width="5" height="1" fill="#0000ff"/><rect x="18" y="11" width="11" height="1" fill="#ffffff"/><rect x="29" y="11" width="1" height="1" fill="#000000"/><rect x="30" y="11" width="2" height="1" fill="#999999"/><rect x="0" y="12" width="1" height="1" fill="#999999"/><rect x="1" y="12" width="12" height="1" fill="#ffffff"/><rect x="13" y="12" width="5" height="1" fill="#0000ff"/><rect x="18" y="12" width="11" height="1" fill="#ffffff"/><rect x="29" y="12" width="1" height="1" fill="#000000"/><rect x="30" y="12" width="2" height="1" fill="#999999"/><rect x="0" y="13" width="1" height="1" fill="#999999"/><rect x="1" y="13" width="12" height="1" fill="#ffffff"/><rect x="13" y="13" width="5" height="1" fill="#0000ff"/><rect x="18" y="13" width="11" height="1" fill="#ffffff"/><rect x="29" y="13" width="1" height="1" fill="#000000"/><rect x="30" y="13" width="2" height="1" fill="#999999"/><rect x="0" y="14" width="1" height="1" fill="#999999"/><rect x="1" y="14" width="12" height="1" fill="#ffffff"/><rect x="13" y="14" width="5" height="1" fill="#0000ff"/><rect x="18" y="14" width="11" height="1" fill="#ffffff"/><rect x="29" y="14" width="1" height="1" fill="#000000"/><rect x="30" y="14" width="2" height="1" fill="#999999"/><rect x="0" y="15" width="1" height="1" fill="#999999"/><rect x="1" y="15" width="12" height="1" fill="#ffffff"/><rect x="13" y="15" width="5" height="1" fill="#0000ff"/><rect x="18" y="15" width="11" height="1" fill="#ffffff"/><rect x="29" y="15" width="1" height="1" fill="#000000"/><rect x="30" y="15" width="2" height="1" fill="#999999"/><rect x="1" y="16" width="1" height="1" fill="#999999"/><rect x="2" y="16" width="11" height="1" fill="#ffffff"/><rect x="13" y="16" width="5" height="1" fill="#0000ff"/><rect x="18" y="16" width="10" height="1" fill="#ffffff"/><rect x="28" y="16" width="1" height="1" fill="#000000"/><rect x="29" y="16" width="3" height="1" fill="#999999"/><rect x="1" y="17" width="1" height="1" fill="#999999"/><rect x="2" y="17" width="11" height="1" fill="#ffffff"/><rect x="13" y="17" width="5" height="1" fill="#0000ff"/><rect x="18" y="17" width="10" height="1" fill="#ffffff"/><rect x="28" y="17" width="1" height="1" fill="#000000"/><rect x="29" y="17" width="3" height="1" fill="#999999"/><rect x="2" y="18" width="1" height="1" fill="#999999"/><rect x="3" y="18" width="10" height="1" fill="#ffffff"/><rect x="13" y="18" width="5" height="1" fill="#0000ff"/><rect x="18" y="18" width="9" height="1" fill="#ffffff"/><rect x="27" y="18" width="1" height="1" fill="#000000"/><rect x="28" y="18" width="3" height="1" fill="#999999"/><rect x="3" y="19" width="1" height="1" fill="#000000"/><rect x="4" y="19" width="7" height="1" fill="#ffffff"/><rect x="11" y="19" width="9" height="1" fill="#0000ff"/><rect x="20" y="19" width="6" height="1" fill="#ffffff"/><rect x="26" y="19" width="1" height="1" fill="#000000"/><rect x="27" y="19" width="4" height="1" fill="#999999"/><rect x="4" y="20" width="1" height="1" fill="#000000"/><rect x="5" y="20" width="20" height="1" fill="#ffffff"/><rect x="25" y="20" width="1" height="1" fill="#000000"/><rect x="26" y="20" width="4" height="1" fill="#999999"/><rect x="5" y="21" width="1" height="1" fill="#000000"/><rect x="6" y="21" width="18" height="1" fill="#ffffff"/><rect x="24" y="21" width="1" height="1" fill="#000000"/><rect x="25" y="21" width="4" height="1" fill="#999999"/><rect x="6" y="22" width="2" height="1" fill="#000000"/><rect x="8" y="22" width="14" height="1" fill="#ffffff"/><rect x="22" y="22" width="2" height="1" fill="#000000"/><rect x="24" y="22" width="4" height="1" fill="#999999"/><rect x="7" y="23" width="1" height="1" fill="#999999"/><rect x="8" y="23" width="3" height="1" fill="#000000"/><rect x="11" y="23" width="8" height="1" fill="#ffffff"/><rect x="19" y="23" width="3" height="1" fill="#000000"/><rect x="22" y="23" width="5" height="1" fill="#999999"/><rect x="8" y="24" width="3" height="1" fill="#999999"/><rect x="11" y="24" width="3" height="1" fill="#000000"/><rect x="14" y="24" width="4" height="1" fill="#ffffff"/><rect x="18" y="24" width="1" height="1" fill="#000000"/><rect x="19" y="24" width="7" height="1" fill="#999999"/><rect x="10" y="25" width="4" height="1" fill="#999999"/><rect x="14" y="25" width="1" height="1" fill="#000000"/><rect x="15" y="25" width="3" height="1" fill="#ffffff"/><rect x="18" y="25" width="1" height="1" fill="#000000"/><rect x="19" y="25" width="5" height="1" fill="#999999"/><rect x="13" y="26" width="1" height="1" fill="#999999"/><rect x="14" y="26" width="1" height="1" fill="#000000"/><rect x="15" y="26" width="3" height="1" fill="#ffffff"/><rect x="18" y="26" width="1" height="1" fill="#000000"/><rect x="19" y="26" width="2" height="1" fill="#999999"/><rect x="15" y="27" width="1" height="1" fill="#000000"/><rect x="16" y="27" width="2" height="1" fill="#ffffff"/><rect x="18" y="27" width="1" height="1" fill="#000000"/><rect x="19" y="27" width="2" height="1" fill="#999999"/><rect x="16" y="28" width="1" height="1" fill="#000000"/><rect x="17" y="28" width="1" height="1" fill="#ffffff"/><rect x="18" y="28" width="1" height="1" fill="#000000"/><rect x="19" y="28" width="2" height="1" fill="#999999"/><rect x="17" y="29" width="2" height="1" fill="#000000"/><rect x="19" y="29" width="2" height="1" fill="#999999"/><rect x="18" y="30" width="3" height="1" fill="#999999"/><rect x="19" y="31" width="2" height="1" fill="#999999"/></svg><span class="t" style="left:292.9px;top:1231.5px;font-size:26px;line-height:26px;letter-spacing:0.632px;">This layer does not support adding new provider fields.You can only add virtual fields.</span><div class="btn" style="left:134.2px;top:1290.0px;width:159.4px;height:48.0px;"></div><span class="t" style="left:186.4px;top:1301.7px;font-size:26px;line-height:26px;color:#000;letter-spacing:0.504px;">Help</span><div class="btn" style="left:2426.0px;top:1290.0px;width:159.9px;height:48.0px;"></div><span class="t" style="left:2465.6px;top:1301.9px;font-size:26px;line-height:26px;color:#000;letter-spacing:-0.040px;">Cancel</span><div class="" style="left:2598.1px;top:1290.0px;width:159.8px;height:48.0px;border:2px solid #4c90e0;border-radius:6px;background:linear-gradient(#fbfcfd,#e2e7ee);"></div><span class="t" style="left:2660.4px;top:1301.9px;font-size:26px;line-height:26px;color:#000;letter-spacing:-1.239px;">OK</span>
</body></html>
